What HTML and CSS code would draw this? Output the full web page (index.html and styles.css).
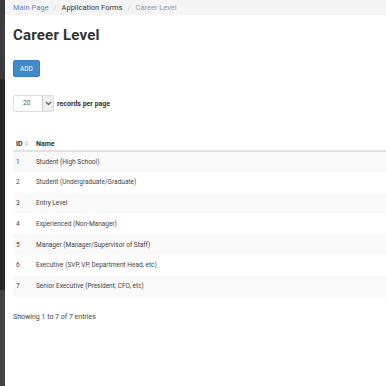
FILE: index.html
```html
<!DOCTYPE html>
<html lang="en">
<head>
	<meta charset="UTF-8">
	<title>Career Level</title>
	<link rel="stylesheet" href="styles.css">
</head>
<body>
	<div id="wrap">
		<div id="sidebar">
			<div class="sb-top"></div>
			<div class="sb-mid"></div>
			<div class="sb-bot"></div>
		</div>
		<div id="main">
			<ul id="crumb">
				<li><a href="#">Main Page</a></li>
				<li class="sep">/</li>
				<li class="dark">Application Forms</li>
				<li class="sep">/</li>
				<li class="cur">Career Level</li>
			</ul>
			<div id="content">
				<h1>Career Level</h1>
				<button class="btn-add">ADD</button>
				<div class="length">
					<span class="select">
						<span class="val">20</span>
						<span class="arr">
							<svg width="7" height="5" viewBox="0 0 7 5"><path d="M1 1l2.5 2.5L6 1" fill="none" stroke="#666" stroke-width="1.3"/></svg>
						</span>
					</span>
					<span class="lbl">records per page</span>
				</div>
				<table id="list">
					<thead>
						<tr><th class="id">ID <span class="sort">&#8661;</span></th><th>Name</th></tr>
					</thead>
					<tbody>
						<tr><td class="id">1</td><td>Student (High School)</td></tr>
						<tr><td class="id">2</td><td>Student (Undergraduate/Graduate)</td></tr>
						<tr><td class="id">3</td><td>Entry Level</td></tr>
						<tr><td class="id">4</td><td>Experienced (Non-Manager)</td></tr>
						<tr><td class="id">5</td><td>Manager (Manager/Supervisor of Staff)</td></tr>
						<tr><td class="id">6</td><td>Executive (SVP, VP, Department Head, etc)</td></tr>
						<tr><td class="id">7</td><td>Senior Executive (President, CFO, etc)</td></tr>
					</tbody>
				</table>
				<div class="info">Showing 1 to 7 of 7 entries</div>
			</div>
		</div>
	</div>
</body>
</html>
```

FILE: styles.css
```css
*{
	margin: 0;
	padding: 0;
	box-sizing: border-box;
}
ul, ol{
	list-style: none;
}
body{
	font-family: Roboto, "Liberation Sans", sans-serif;
	color: #333;
	background: #fff;
	overflow: hidden;
}
#wrap{
	display: flex;
	height: 386px;
}
#sidebar{
	width: 5px;
	display: flex;
	flex-direction: column;
	background: #3c3c41;
}
.sb-top{
	height: 80px;
	background: #3a3a3f;
	border-bottom: 1px solid #2a2a2e;
}
.sb-mid{
	height: 210px;
	background: #252528;
}
.sb-bot{
	flex: 1;
	background: #414146;
}
#main{
	flex: 1;
	min-width: 0;
}
#crumb{
	height: 15px;
	background: #f5f5f5;
	display: flex;
	align-items: center;
	padding-left: 8px;
	font-size: 7.5px;
	gap: 5px;
}
#crumb a{
	color: #4a8ccb;
	text-decoration: none;
}
#crumb .sep{
	color: #ccc;
}
#crumb .dark{
	color: #333;
}
#crumb .cur{
	color: #999;
}
#content{
	padding-left: 8px;
}
h1{
	font-size: 15px;
	font-weight: bold;
	line-height: 18px;
	margin-top: 11px;
	letter-spacing: 0.2px;
}
.btn-add{
	display: block;
	margin-top: 16px;
	width: 27px;
	height: 17px;
	background: #428bca;
	border: 1px solid #3a7fbd;
	border-radius: 2px;
	color: #fff;
	font-family: Roboto, "Liberation Sans", sans-serif;
	font-size: 6.5px;
}
.length{
	display: flex;
	align-items: center;
	margin-top: 18px;
	gap: 3px;
}
.select{
	display: flex;
	width: 41px;
	height: 17px;
	border: 1px solid #ddd;
	border-radius: 2px;
	background: #fff;
}
.select .val{
	flex: 1;
	font-size: 6.5px;
	line-height: 15px;
	padding-left: 9px;
	color: #555;
}
.select .arr{
	width: 11px;
	background: #eee;
	border-left: 1px solid #ccc;
	display: flex;
	align-items: center;
	justify-content: center;
}
.lbl{
	font-size: 7px;
	font-weight: bold;
	color: #333;
}
#list{
	width: 100%;
	border-collapse: collapse;
	margin-top: 25px;
	font-size: 6.5px;
}
#list th{
	text-align: left;
	font-size: 7px;
	font-weight: bold;
	height: 14px;
	border-bottom: 2px solid #e2e2e2;
	padding: 0 3px;
	vertical-align: middle;
	color: #333;
}
#list th .sort{
	color: #aaa;
	font-weight: normal;
	font-size: 6px;
}
#list td{
	height: 20.8px;
	padding: 0 3px;
	color: #444;
}
#list .id{
	width: 20px;
}
#list tbody tr:nth-child(odd){
	background: #f9f9f9;
}
.info{
	margin-top: 16px;
	font-size: 7px;
	color: #444;
}
```
